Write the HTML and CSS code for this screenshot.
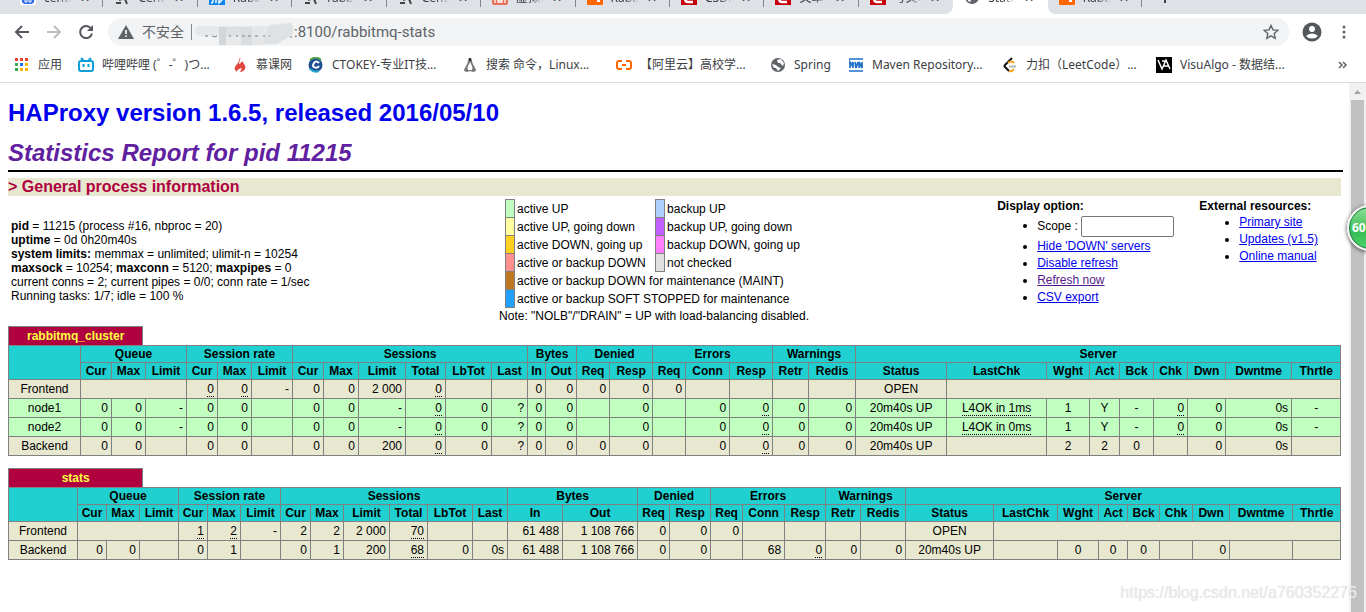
FILE: index.html
```html
<!DOCTYPE html>
<html lang="zh-CN">
<head>
<meta charset="utf-8">
<title>Statistics Report for HAProxy</title>
<link rel="stylesheet" href="styles.css">
</head>
<body>
<header class="browser">
  <div class="tabs">
    <div class="tab"><svg class="fav" viewBox="0 0 16 16"><rect width="16" height="16" fill="#fff"/><path d="M8 6c3 0 5 3 6 5s-1 4-3 4H5c-2 0-4-2-3-4s3-5 6-5z" fill="#2b6de8"/><path d="M5 10v3h2v-3M9 10v3h2v-3" stroke="#fff" fill="none"/></svg><span class="name">cento</span><span class="x">✕</span></div>
    <div class="tab"><svg class="fav" viewBox="0 0 16 16"><path d="M2 14h5M5 11l3-1M11 10l2 5" stroke="#444" stroke-width="2" fill="none"/></svg><span class="name">Cento</span><span class="x">✕</span></div>
    <div class="tab"><svg class="fav" viewBox="0 0 16 16"><rect width="16" height="16" fill="#0a84f0"/><path d="M4 8v4q0 2-2 2M7 9v5M10 8v6l3-3v-3" stroke="#fff" stroke-width="1.5" fill="none"/></svg><span class="name">Rabbi</span><span class="x">✕</span></div>
    <div class="tab"><svg class="fav" viewBox="0 0 16 16"><path d="M2 14h5M5 11l3-1M11 10l2 5" stroke="#444" stroke-width="2" fill="none"/></svg><span class="name">rabbi</span><span class="x">✕</span></div>
    <div class="tab"><svg class="fav" viewBox="0 0 16 16"><path d="M2 14h5M5 11l3-1M11 10l2 5" stroke="#444" stroke-width="2" fill="none"/></svg><span class="name">Cento</span><span class="x">✕</span></div>
    <div class="tab"><svg class="fav" viewBox="0 0 16 16"><rect width="16" height="16" rx="2" fill="#ea6f5a"/><path d="M3 7v7M13 7v7M6 9h4v4H6zM6 11h4" stroke="#fff" stroke-width="1.3" fill="none"/></svg><span class="name">虚拟机</span><span class="x">✕</span></div>
    <div class="tab"><svg class="fav" viewBox="0 0 16 16"><rect width="16" height="16" rx="1" fill="#f60"/><rect x="10" y="10" width="3" height="3" fill="#fff"/></svg><span class="name">Rabbi</span><span class="x">✕</span></div>
    <div class="tab"><svg class="fav" viewBox="0 0 16 16"><rect width="16" height="16" fill="#c8000b"/><path d="M12 5H7q-3 0-3 4t3 4h5" stroke="#fff" stroke-width="2.5" fill="none"/></svg><span class="name">CSDN</span><span class="x">✕</span></div>
    <div class="tab"><svg class="fav" viewBox="0 0 16 16"><rect width="16" height="16" fill="#c8000b"/><path d="M12 5H7q-3 0-3 4t3 4h5" stroke="#fff" stroke-width="2.5" fill="none"/></svg><span class="name">文章管</span><span class="x">✕</span></div>
    <div class="tab last"><svg class="fav" viewBox="0 0 16 16"><rect width="16" height="16" fill="#c8000b"/><path d="M12 5H7q-3 0-3 4t3 4h5" stroke="#fff" stroke-width="2.5" fill="none"/></svg><span class="name">写文章</span><span class="x">✕</span></div>
    <div class="tab active"><svg class="fav" viewBox="0 0 16 16"><circle cx="8" cy="8" r="7" fill="#5f6368"/><path d="M8 4l5 2-2 3-3-1zM3 8l3 1 1 4-3-1z" fill="#fff"/></svg><span class="name">Statis</span><span class="x">✕</span></div>
    <div class="tab after"><svg class="fav" viewBox="0 0 16 16"><rect width="16" height="16" rx="1" fill="#f60"/><rect x="10" y="10" width="3" height="3" fill="#fff"/></svg><span class="name">Rabbi</span><span class="x">✕</span></div>
    <button class="newtab" aria-label="New tab"><svg width="14" height="14" viewBox="0 0 14 14"><path d="M7 1v12M1 7h12" stroke="#3c4043" stroke-width="2"/></svg></button>
  </div>
  <div class="toolbar">
    <button class="tool" aria-label="Back"><svg width="16" height="16" viewBox="0 0 16 16"><path d="M15 8H2M8 2L2 8l6 6" fill="none" stroke="#54585c" stroke-width="2"/></svg></button>
    <button class="tool" aria-label="Forward"><svg width="16" height="16" viewBox="0 0 16 16"><path d="M1 8h13M8 2l6 6-6 6" fill="none" stroke="#babcbe" stroke-width="2"/></svg></button>
    <button class="tool" aria-label="Reload"><svg width="16" height="16" viewBox="0 0 16 16"><path d="M13.2 4.8A6 6 0 1 0 14 9.500" fill="none" stroke="#54585c" stroke-width="2"/><path d="M15 1v6H9z" fill="#54585c"/></svg></button>
    <div class="omnibox">
      <svg class="warn" width="16" height="14" viewBox="0 0 16 14"><path d="M8 0l8 14H0z" fill="#5f6368"/><path d="M8 5v4M8 10.500v1.500" stroke="#fff" stroke-width="1.600"/></svg>
      <span class="insecure">不安全</span>
      <span class="bar"></span>
      <svg class="smudge" width="99" height="28" viewBox="0 0 99 28"><rect x="0" y="8" width="96" height="10" rx="5" fill="#e6e8ea"/><path d="M74 7l22-2q4 5 1 12L82 26H66z" fill="#dfe2e4"/><rect x="24" y="9" width="7" height="18" fill="#d2d6d9"/><rect x="31" y="9" width="15" height="9" fill="#dee1e3"/><rect x="46" y="9" width="11" height="18" fill="#d9dddf"/><rect x="57" y="9" width="11" height="18" fill="#e4e6e8"/><rect x="31" y="18" width="15" height="9" fill="#e7e9eb"/><path d="M10 18h3M17 18q3 2 5 0M34 18h2M41 18h2M47 18h3M53 18h3M60 18h3M68 18h2M74 18h1M95 19h2" stroke="#7b8087" fill="none"/></svg>
      <span class="url">:8100/rabbitmq-stats</span>
      <svg class="star" width="16" height="16" viewBox="0 0 16 16"><path d="M8 1.500l2 4.400 4.800.5-3.600 3.200 1 4.700L8 11.900l-4.200 2.400 1-4.700L1.200 6.400l4.800-.5z" fill="none" stroke="#5f6368" stroke-width="1.400"/></svg>
    </div>
    <button class="tool user" aria-label="Profile"><svg width="20" height="20" viewBox="0 0 20 20"><circle cx="10" cy="10" r="9.500" fill="#54585c"/><circle cx="10" cy="7" r="3" fill="#fff"/><path d="M4 14q2-2.500 6-2.500t6 2.500q-2 2.500-6 2.500t-6-2.500z" fill="#fff"/></svg></button>
    <button class="tool" aria-label="Menu"><svg width="16" height="16" viewBox="0 0 16 16"><circle cx="8" cy="3" r="1.500" fill="#5f6368"/><circle cx="8" cy="8" r="1.500" fill="#5f6368"/><circle cx="8" cy="13" r="1.500" fill="#5f6368"/></svg></button>
  </div>
  <nav class="bookmarks">
    <a class="bm apps" href="#"><svg width="16" height="16" viewBox="0 0 16 16"><path d="M1 1h3v3H1zM6 1h3v3H6zM11 1h3v3h-3z" fill="#ea4335"/><path d="M1 6h3v3H1zM1 11h3v3H1z" fill="#34a853"/><path d="M6 6h3v3H6z" fill="#1a73e8"/><path d="M11 6h3v3h-3zM6 11h3v3H6zM11 11h3v3h-3z" fill="#fbb605"/></svg>应用</a>
    <a class="bm wide" href="#"><svg width="16" height="16" viewBox="0 0 16 16"><path d="M3 1l3 3M13 1l-3 3" stroke="#0e9fd8" stroke-width="2"/><rect x="1" y="4" width="14" height="10" rx="2" fill="#fff" stroke="#0e9fd8" stroke-width="2"/><path d="M5.500 7v3M10.500 7v3" stroke="#0e9fd8" stroke-width="2"/></svg>哔哩哔哩 (゜-゜)つ...</a>
    <a class="bm mid" href="#"><svg width="16" height="16" viewBox="0 0 16 16"><path d="M8 0c1 3-1 4-1 7 1 0 2-1 3-3 3 4 4 6 3 8s-3 3-5 3l2-4-3 1c-2 1-2 2-2 3-2-2-3-3-2-5s4-4 5-10z" fill="#e2453f"/></svg>慕课网</a>
    <a class="bm wide" href="#"><svg width="16" height="16" viewBox="0 0 16 16"><circle cx="7.500" cy="8" r="7" fill="#1d4f91"/><path d="M2 3Q8-2 13 3" stroke="#54a84c" stroke-width="2" fill="none"/><path d="M11 6q-3-3-5 0t0 4q3 2 5-1" stroke="#fff" stroke-width="2" fill="none"/><path d="M2 12q4 4 9 2" stroke="#29a6d6" stroke-width="2" fill="none"/></svg>CTOKEY-专业IT技...</a>
    <a class="bm wide" href="#"><svg width="16" height="16" viewBox="0 0 16 16"><path d="M8 1q2 0 2 3 0 2 2 5t2 5l-3 1-3-1-3 1-3-1q0-2 2-5t2-5q0-3 2-3z" fill="#777"/><path d="M8 5q1 2 2 4t0 4H6q-1-2 0-4t2-4z" fill="#fff"/><path d="M7 1h2v3H7z" fill="#333"/></svg>搜索 命令，Linux...</a>
    <a class="bm wide" href="#"><svg width="16" height="16" viewBox="0 0 16 16"><path d="M6 4H3Q1 4 1 6v4q0 2 2 2h3M10 4h3q2 0 2 2v4q0 2-2 2h-3M6 8h4" fill="none" stroke="#ff6a00" stroke-width="2"/></svg>【阿里云】高校学...</a>
    <a class="bm mid two" href="#"><svg width="16" height="16" viewBox="0 0 16 16"><circle cx="8" cy="8" r="7" fill="#5f6368"/><path d="M7 3l4-1 3 4-1 3-3-3H8zM2 7l4 1 2 2 3 1-3 3-2-3H4z" fill="#fff"/></svg>Spring</a>
    <a class="bm wide" href="#"><svg width="16" height="16" viewBox="0 0 16 16"><path d="M1 2h14M1 14h14M2 11V5l2 3 1-3v6M7 5l1 6 2-6M11 11V5l3 6V5" fill="none" stroke="#1c6fc9" stroke-width="1.700"/></svg>Maven Repository...</a>
    <a class="bm wide" href="#"><svg width="16" height="16" viewBox="0 0 16 16"><path d="M10 1L3 8q-1 1 0 2l4 4" fill="none" stroke="#111" stroke-width="2"/><path d="M6 6q3-3 6 0M7 14q3 1 5-2" fill="none" stroke="#ffa116" stroke-width="2"/><path d="M7 9.500h7" stroke="#b3b3b3" stroke-width="2"/></svg>力扣（LeetCode）...</a>
    <a class="bm wide" href="#"><svg width="16" height="16" viewBox="0 0 16 16"><rect width="16" height="16" fill="#000"/><path d="M2 3l4 9 4-9 4 9M8 9h5M6 4h3" fill="none" stroke="#fff" stroke-width="1.500"/></svg>VisuAlgo - 数据结...</a>
    <button class="more" aria-label="More bookmarks"><svg width="10" height="8" viewBox="0 0 10 8"><path d="M1 1l3 3-3 3M5 1l3 3-3 3" fill="none" stroke="#5f6368" stroke-width="1.500"/></svg></button>
  </nav>
</header>

<div class="viewport">
<main class="page">
  <h1><a href="#">HAProxy version 1.6.5, released 2016/05/10</a></h1>
  <h2>Statistics Report for pid 11215</h2>
  <hr>
  <h3>&gt; General process information</h3>

  <section class="info">
    <p class="process">
      <b>pid</b> = 11215 (process #16, nbproc = 20)<br>
      <b>uptime</b> = 0d 0h20m40s<br>
      <b>system limits:</b> memmax = unlimited; ulimit-n = 10254<br>
      <b>maxsock</b> = 10254; <b>maxconn</b> = 5120; <b>maxpipes</b> = 0<br>
      current conns = 2; current pipes = 0/0; conn rate = 1/sec<br>
      Running tasks: 1/7; idle = 100 %
    </p>
    <div>
      <table class="legend">
        <tr><td class="sw up"></td><td class="first">active UP</td><td class="sw bup"></td><td>backup UP</td></tr>
        <tr><td class="sw upgd"></td><td>active UP, going down</td><td class="sw bupgd"></td><td>backup UP, going down</td></tr>
        <tr><td class="sw dngu"></td><td>active DOWN, going up</td><td class="sw bdngu"></td><td>backup DOWN, going up</td></tr>
        <tr><td class="sw down"></td><td>active or backup DOWN</td><td class="sw nochk"></td><td>not checked</td></tr>
        <tr><td class="sw maint"></td><td colspan="3">active or backup DOWN for maintenance (MAINT)</td></tr>
        <tr><td class="sw soft"></td><td colspan="3">active or backup SOFT STOPPED for maintenance</td></tr>
      </table>
      <p class="note">Note: "NOLB"/"DRAIN" = UP with load-balancing disabled.</p>
    </div>
    <div>
      <b>Display option:</b>
      <ul>
        <li class="scope"><label for="scope">Scope :</label> <input id="scope" type="text"></li>
        <li><a href="#">Hide 'DOWN' servers</a></li>
        <li><a href="#">Disable refresh</a></li>
        <li><a class="seen" href="#">Refresh now</a></li>
        <li><a href="#">CSV export</a></li>
      </ul>
    </div>
    <div>
      <b>External resources:</b>
      <ul>
        <li><a href="#">Primary site</a></li>
        <li><a href="#">Updates (v1.5)</a></li>
        <li><a href="#">Online manual</a></li>
      </ul>
    </div>
  </section>

  <section class="proxy">
    <div class="pxname">rabbitmq_cluster</div>
    <table class="tbl">
      <colgroup><col width="72"><col width="31"><col width="34"><col width="41"><col width="31"><col width="34"><col width="41"><col width="31"><col width="35"><col width="47"><col width="40"><col width="46"><col width="36"><col width="18"><col width="31"><col width="33"><col width="43"><col width="33"><col width="44"><col width="43"><col width="36"><col width="47"><col width="91"><col width="100"><col width="43"><col width="30"><col width="34"><col width="34"><col width="38"><col width="66"><col width="49"></colgroup>
      <thead>
        <tr><th rowspan="2"></th><th colspan="3">Queue</th><th colspan="3">Session rate</th><th colspan="6">Sessions</th><th colspan="2">Bytes</th><th colspan="2">Denied</th><th colspan="3">Errors</th><th colspan="2">Warnings</th><th colspan="9">Server</th></tr>
        <tr><th>Cur</th><th>Max</th><th>Limit</th><th>Cur</th><th>Max</th><th>Limit</th><th>Cur</th><th>Max</th><th>Limit</th><th>Total</th><th>LbTot</th><th>Last</th><th>In</th><th>Out</th><th>Req</th><th>Resp</th><th>Req</th><th>Conn</th><th>Resp</th><th>Retr</th><th>Redis</th><th>Status</th><th>LastChk</th><th>Wght</th><th>Act</th><th>Bck</th><th>Chk</th><th>Dwn</th><th>Dwntme</th><th>Thrtle</th></tr>
      </thead>
      <tbody>
        <tr><td class="ac">Frontend</td><td colspan="3"></td><td><u>0</u></td><td><u>0</u></td><td>-</td><td>0</td><td>0</td><td>2 000</td><td><u>0</u></td><td></td><td></td><td>0</td><td>0</td><td>0</td><td>0</td><td>0</td><td></td><td></td><td></td><td></td><td class="ac">OPEN</td><td colspan="8"></td></tr>
        <tr class="ok"><td class="ac">node1</td><td>0</td><td>0</td><td>-</td><td>0</td><td>0</td><td></td><td>0</td><td>0</td><td>-</td><td><u>0</u></td><td>0</td><td>?</td><td>0</td><td>0</td><td></td><td>0</td><td></td><td>0</td><td><u>0</u></td><td>0</td><td>0</td><td class="ac">20m40s UP</td><td class="ac"><u>L4OK in 1ms</u></td><td class="ac">1</td><td class="ac">Y</td><td class="ac">-</td><td><u>0</u></td><td>0</td><td>0s</td><td class="ac">-</td></tr>
        <tr class="ok"><td class="ac">node2</td><td>0</td><td>0</td><td>-</td><td>0</td><td>0</td><td></td><td>0</td><td>0</td><td>-</td><td><u>0</u></td><td>0</td><td>?</td><td>0</td><td>0</td><td></td><td>0</td><td></td><td>0</td><td><u>0</u></td><td>0</td><td>0</td><td class="ac">20m40s UP</td><td class="ac"><u>L4OK in 0ms</u></td><td class="ac">1</td><td class="ac">Y</td><td class="ac">-</td><td><u>0</u></td><td>0</td><td>0s</td><td class="ac">-</td></tr>
        <tr><td class="ac">Backend</td><td>0</td><td>0</td><td></td><td>0</td><td>0</td><td></td><td>0</td><td>0</td><td>200</td><td><u>0</u></td><td>0</td><td>?</td><td>0</td><td>0</td><td>0</td><td>0</td><td></td><td>0</td><td><u>0</u></td><td>0</td><td>0</td><td class="ac">20m40s UP</td><td></td><td class="ac">2</td><td class="ac">2</td><td class="ac">0</td><td></td><td>0</td><td>0s</td><td></td></tr>
      </tbody>
    </table>
  </section>

  <section class="proxy">
    <div class="pxname">stats</div>
    <table class="tbl">
      <colgroup><col width="69"><col width="29"><col width="33"><col width="39"><col width="29"><col width="33"><col width="40"><col width="30"><col width="33"><col width="46"><col width="38"><col width="45"><col width="35"><col width="55"><col width="75"><col width="32"><col width="41"><col width="32"><col width="42"><col width="41"><col width="35"><col width="45"><col width="88"><col width="64"><col width="41"><col width="29"><col width="32"><col width="33"><col width="37"><col width="63"><col width="48"></colgroup>
      <thead>
        <tr><th rowspan="2"></th><th colspan="3">Queue</th><th colspan="3">Session rate</th><th colspan="6">Sessions</th><th colspan="2">Bytes</th><th colspan="2">Denied</th><th colspan="3">Errors</th><th colspan="2">Warnings</th><th colspan="9">Server</th></tr>
        <tr><th>Cur</th><th>Max</th><th>Limit</th><th>Cur</th><th>Max</th><th>Limit</th><th>Cur</th><th>Max</th><th>Limit</th><th>Total</th><th>LbTot</th><th>Last</th><th>In</th><th>Out</th><th>Req</th><th>Resp</th><th>Req</th><th>Conn</th><th>Resp</th><th>Retr</th><th>Redis</th><th>Status</th><th>LastChk</th><th>Wght</th><th>Act</th><th>Bck</th><th>Chk</th><th>Dwn</th><th>Dwntme</th><th>Thrtle</th></tr>
      </thead>
      <tbody>
        <tr><td class="ac">Frontend</td><td colspan="3"></td><td><u>1</u></td><td><u>2</u></td><td>-</td><td>2</td><td>2</td><td>2 000</td><td><u>70</u></td><td></td><td></td><td>61 488</td><td>1 108 766</td><td>0</td><td>0</td><td>0</td><td></td><td></td><td></td><td></td><td class="ac">OPEN</td><td colspan="8"></td></tr>
        <tr><td class="ac">Backend</td><td>0</td><td>0</td><td></td><td>0</td><td>1</td><td></td><td>0</td><td>1</td><td>200</td><td><u>68</u></td><td>0</td><td>0s</td><td>61 488</td><td>1 108 766</td><td>0</td><td>0</td><td></td><td>68</td><td><u>0</u></td><td>0</td><td>0</td><td class="ac">20m40s UP</td><td></td><td class="ac">0</td><td class="ac">0</td><td class="ac">0</td><td></td><td>0</td><td></td><td></td></tr>
      </tbody>
    </table>
  </section>
</main>
<div class="scrollbar"><svg class="arrow" width="17" height="17" viewBox="0 0 17 17"><path d="M5 11l3.500-4L12 11z" fill="#a3a3a3"/></svg><div class="thumb"></div></div>
<div class="ball">60</div>
</div>
<div class="watermark">https://blog.csdn.net/a760352276</div>
</body>
</html>
```
FILE: styles.css
```css
* { box-sizing: border-box; }
body {
  margin: 0;
  min-height: 100vh;
  display: flex;
  flex-direction: column;
  position: relative;
  overflow: hidden;
  background: #fff;
  color: #000;
  font: 12px/14px "Liberation Sans", Arial, sans-serif;
}
button { border: 0; padding: 0; background: none; }
svg { display: block; flex: none; }
p { margin: 0; }

/* Browser frame */
.browser {
  font-family: "Noto Sans", "Noto Sans CJK SC", sans-serif;
  color: #3c4043;
  border-bottom: 1px solid #d9dbde;
}
.tabs {
  height: 14px;
  overflow: hidden;
  display: flex;
  align-items: flex-end;
  padding-left: 9px;
  background: #dee1e6;
}
.tab {
  height: 34px;
  flex: 1 1 0;
  display: flex;
  align-items: center;
  padding-left: 11px;
  background: linear-gradient(#80868b, #80868b) right center / 1px 20px no-repeat #dee1e6;
}
.tab.last { background: #dee1e6; border-bottom-right-radius: 8px; }
.tab.after { border-bottom-left-radius: 8px; }
.tab.active { background: #fff; box-shadow: -8px 0 #fff, 8px 0 #fff; }
.tab.last, .tab.after { z-index: 1; }
.fav { width: 16px; height: 16px; }
.name {
  width: 28px;
  height: 20px;
  margin: 0 8px;
  line-height: 20px;
  padding-top: 1px;
  overflow: hidden;
  white-space: nowrap;
  -webkit-mask-image: linear-gradient(90deg, #000 50%, transparent);
  mask-image: linear-gradient(90deg, #000 50%, transparent);
}
.x { font-size: 12px; padding-top: 2px; }
.newtab { width: 224px; height: 34px; padding-left: 16px; display: flex; align-items: center; }
.toolbar {
  height: 36px;
  display: flex;
  align-items: center;
  padding: 0 14px;
  gap: 16px;
}
.tool { display: flex; }
.user { margin-right: -2px; }
.omnibox {
  flex: 1;
  height: 28px;
  margin: 0 -3px 0 -2px;
  display: flex;
  align-items: center;
  padding: 0 10px;
  border-radius: 14px;
  background: #f1f3f4;
  color: #5f6368;
  font-size: 14px;
}
.insecure { margin-left: 8px; }
.bar { width: 1px; height: 16px; margin: 0 3px 0 7px; background: #80868b; }
.url { flex: 1; font-family: Roboto, sans-serif; font-size: 15px; }
.bookmarks { height: 32px; display: flex; align-items: center; padding: 0 14px 3px; }
.bm { display: flex; align-items: center; gap: 8px; white-space: nowrap; line-height: 16px; color: inherit; text-decoration: none; }
.apps { width: 64px; }
.wide { width: 154px; }
.mid { width: 76px; }
.mid.two { width: 78px; }
.more { margin-left: auto; padding-right: 4px; }

/* Page area */
.viewport { flex: 1; display: flex; position: relative; }
.page { flex: 1; padding: 0 8px; }
h1 { margin: 16px 0 12px; font-size: 24px; line-height: 28px; }
h1 a { color: #0000ee; text-decoration: none; }
h2 { margin: 0 0 3px; font-size: 24px; line-height: 28px; font-style: italic; color: #6020a0; }
hr { margin: 0 -2px 6px 0; border: 0; height: 2px; background: #000; }
h3 { margin: 0; font-size: 16px; line-height: 18px; color: #b00040; background: #e8e8d0; }

.info {
  display: grid;
  grid-template-columns: 488fr 498fr 202fr 142fr;
  padding: 3px 0 3px 3px;
  white-space: nowrap;
}
.process { align-self: center; }
.legend { margin-left: 6px; border-collapse: collapse; }
.legend td { height: 18px; padding: 0 2px; }
.legend .first { width: 141px; }
.legend .sw { width: 9px; padding: 0 4px; border: 1px solid gray; }
.note { margin-top: 1px; }
.up { background: #c0ffc0; }
.upgd { background: #ffffa0; }
.dngu { background: #ffd020; }
.down { background: #ff9090; }
.maint { background: #c07820; }
.soft { background: #20a0ff; }
.bup { background: #b0d0ff; }
.bupgd { background: #c060ff; }
.bdngu { background: #ff80ff; }
.nochk { background: #e0e0e0; }
.info ul { margin: 1px 0 0; padding-left: 40px; line-height: 17px; }
.info a { color: #0000ee; }
.info a.seen { color: #551a8b; }
.scope label { vertical-align: middle; }
.scope input {
  width: 93px;
  height: 21px;
  margin: 2px 0 1px;
  padding: 1px 2px;
  border: 1px solid #767676;
  border-radius: 2px;
  vertical-align: middle;
}

.proxy { margin-bottom: 12px; }
.pxname {
  box-sizing: content-box;
  width: 10%;
  padding: 2px 0;
  border: 1px solid gray;
  border-bottom: 0;
  background: #b00040;
  color: #ffff40;
  font-weight: bold;
  text-align: center;
}
.tbl { width: 100%; table-layout: fixed; border-collapse: collapse; }
.tbl th, .tbl td { border: 1px solid gray; white-space: nowrap; }
.tbl th { padding: 1px 0; background: #20d0d0; }
.tbl td { height: 19px; padding: 2px 3px; text-align: right; }
.tbl tbody tr { background: #e8e8d0; }
.tbl tbody tr.ok { background: #c0ffc0; }
.tbl td.ac { text-align: center; }
.tbl u { text-decoration: none; border-bottom: 1px dotted #000; }

.scrollbar { width: 17px; display: flex; flex-direction: column; background: #f1f1f1; }
.thumb { flex: 1; margin: 0 2px; background: #c1c1c1; }
.ball {
  position: absolute;
  top: 122px;
  right: -27px;
  width: 46px;
  height: 46px;
  padding-left: 3px;
  border: 2px solid #f4f4f4;
  border-radius: 50%;
  background: linear-gradient(#8fdf94, #37bd55 60%, #4fd26b);
  box-shadow: 0 1px 4px #444, inset 0 0 0 1px #17793f;
  color: #fff;
  font: bold 12px/42px "Noto Sans", sans-serif;
}
.watermark {
  position: absolute;
  right: 9px;
  bottom: 9px;
  color: #ebebeb;
  font: 16px/20px "Liberation Sans", sans-serif;
  text-shadow: 0 0 1px #d8d8d8;
}
```
